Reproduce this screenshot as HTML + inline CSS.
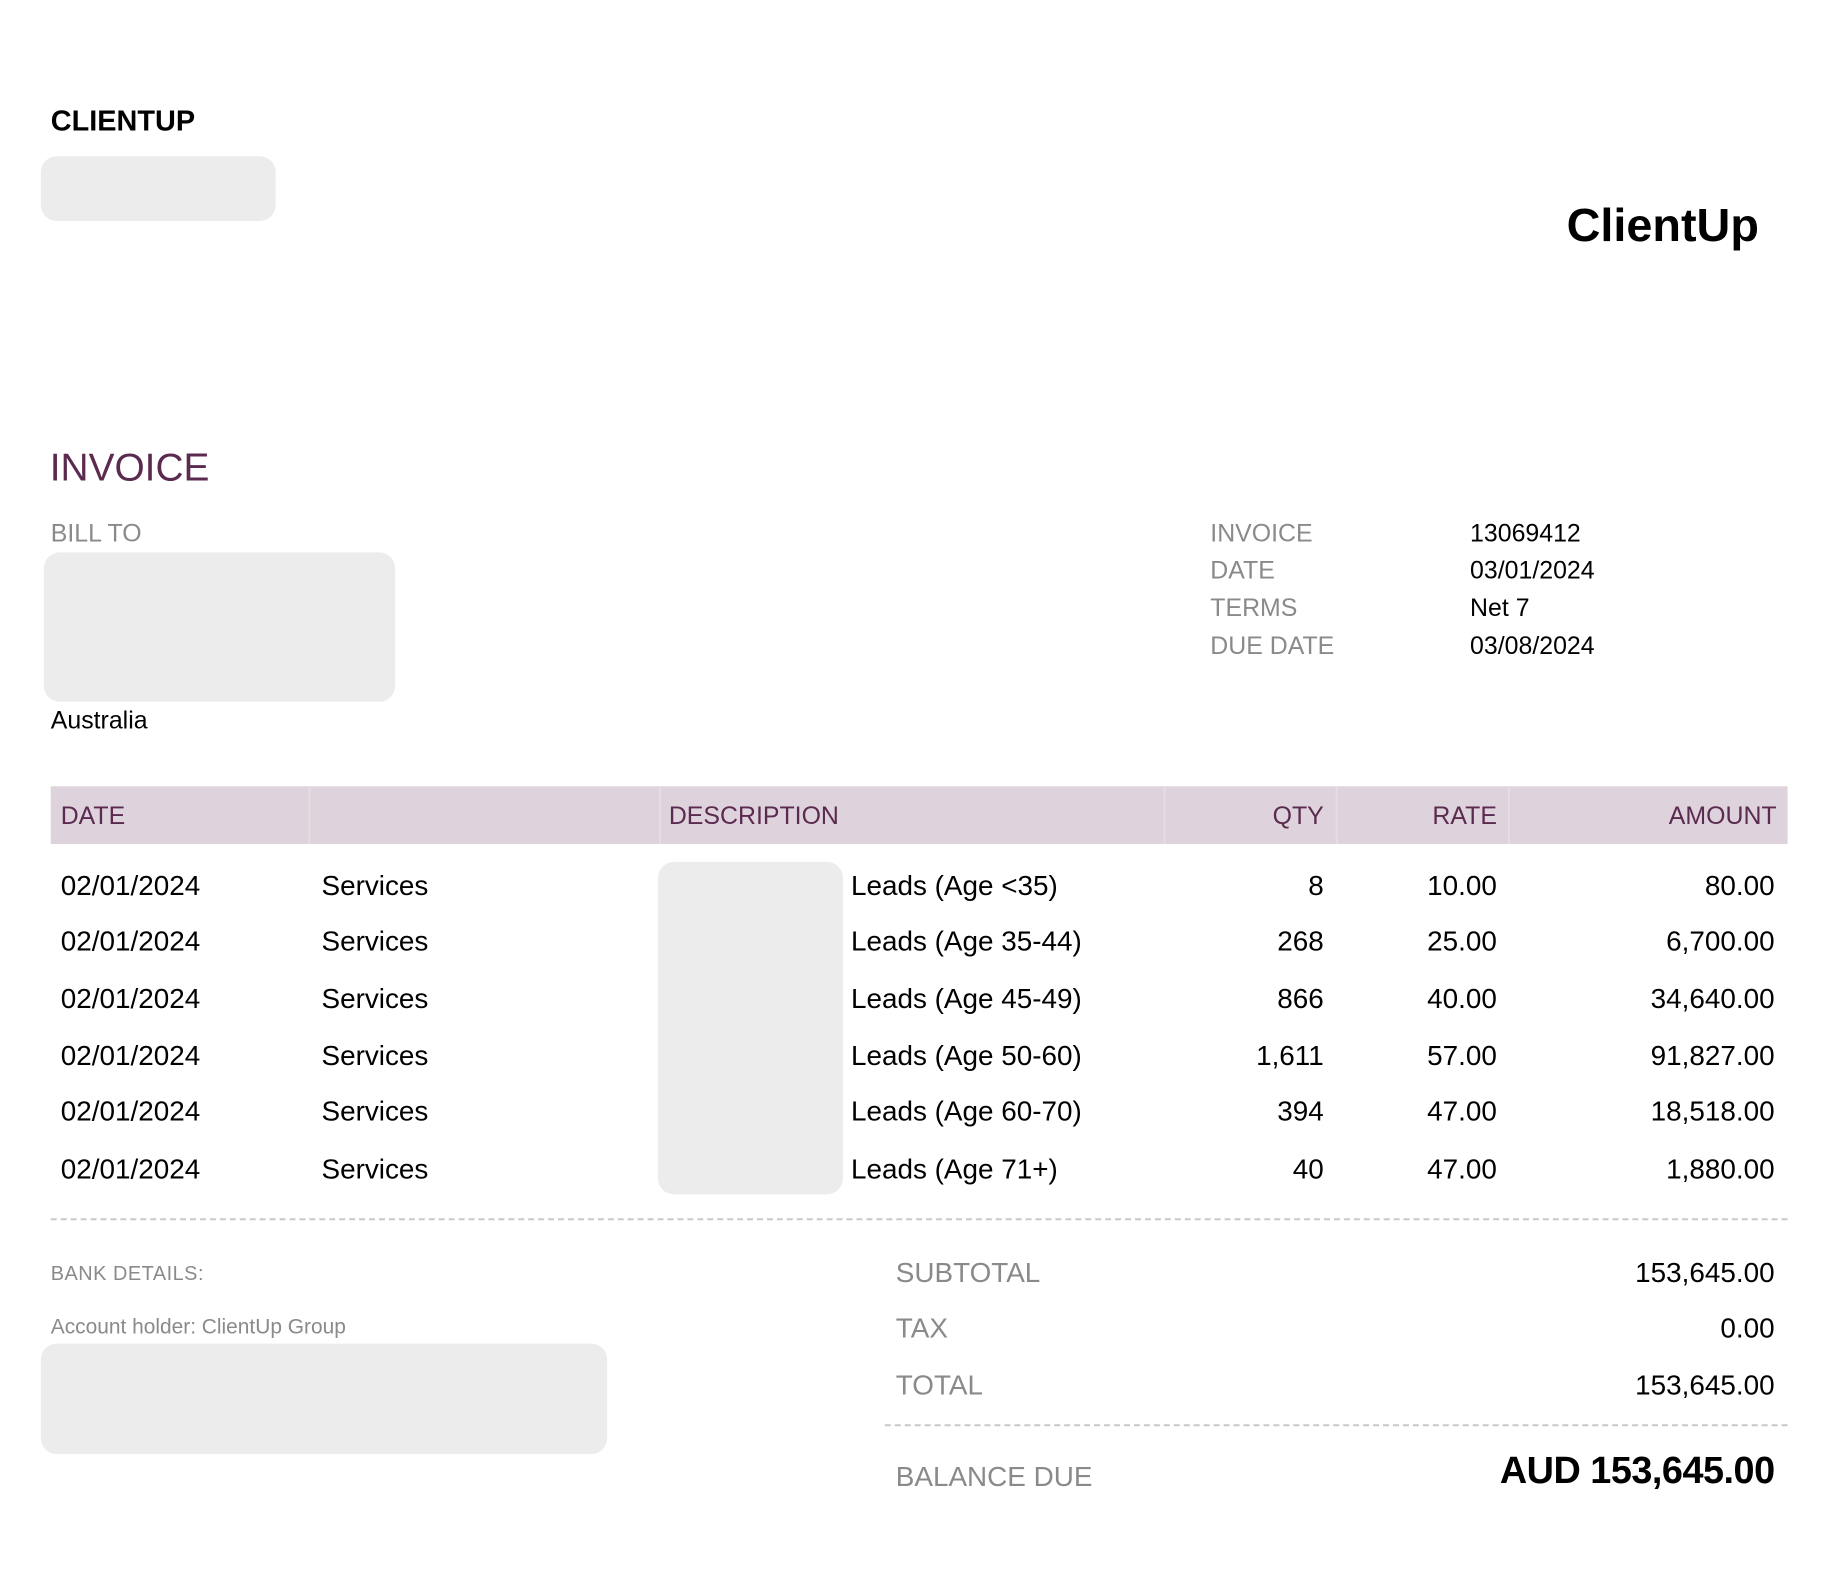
<!DOCTYPE html>
<html><head><meta charset="utf-8"><style>
*{margin:0;padding:0;box-sizing:border-box}
html,body{width:1838px;height:1582px;background:#fff;overflow:hidden}
body{font-family:"Liberation Sans",Arial,sans-serif;color:#000}
#w{position:absolute;left:0;top:0;width:1838px;height:1582px;transform:scale(0.9953);transform-origin:0 0}
.t{position:absolute;line-height:1;white-space:nowrap}
.r{text-align:right}
.g{color:#8a8a8a}
.p{color:#5b2a4f}
.box{position:absolute;background:#ececec;border-radius:16px}
.hdr{position:absolute;left:51px;top:790px;width:1745px;height:58px;background:#ded3dc}
.div{position:absolute;top:790px;width:2px;height:58px;background:#e6dde4}
.dash{position:absolute;height:0;border-top:2px dashed #c8c8c8}
.row{font-size:28px}
</style></head><body><div id="w">
<div class="t" style="left:51px;top:108px;font-size:29px;font-weight:bold">CLIENTUP</div>
<div class="box" style="left:41px;top:157px;width:236px;height:65px"></div>
<div class="t" style="left:1574px;top:202px;font-size:47px;font-weight:bold">ClientUp</div>

<div class="t p" style="left:50px;top:451px;font-size:39px">INVOICE</div>
<div class="t g" style="left:51px;top:524px;font-size:25px">BILL TO</div>
<div class="box" style="left:44px;top:555px;width:353px;height:150px"></div>
<div class="t" style="left:51px;top:712px;font-size:25px">Australia</div>

<div class="t g" style="left:1216px;top:524px;font-size:25px">INVOICE</div>
<div class="t g" style="left:1216px;top:561px;font-size:25px">DATE</div>
<div class="t g" style="left:1216px;top:599px;font-size:25px">TERMS</div>
<div class="t g" style="left:1216px;top:637px;font-size:25px">DUE DATE</div>
<div class="t" style="left:1477px;top:524px;font-size:25px">13069412</div>
<div class="t" style="left:1477px;top:561px;font-size:25px">03/01/2024</div>
<div class="t" style="left:1477px;top:599px;font-size:25px">Net 7</div>
<div class="t" style="left:1477px;top:637px;font-size:25px">03/08/2024</div>

<div class="hdr"></div>
<div class="div" style="left:310px"></div>
<div class="div" style="left:662px"></div>
<div class="div" style="left:1169px"></div>
<div class="div" style="left:1342px"></div>
<div class="div" style="left:1515px"></div>
<div class="t p" style="left:61px;top:808px;font-size:25px">DATE</div>
<div class="t p" style="left:672px;top:808px;font-size:25px">DESCRIPTION</div>
<div class="t p r" style="right:508px;top:808px;font-size:25px">QTY</div>
<div class="t p r" style="right:334px;top:808px;font-size:25px">RATE</div>
<div class="t p r" style="right:53px;top:808px;font-size:25px">AMOUNT</div>

<div class="box" style="left:661px;top:866px;width:186px;height:334px"></div>

<div class="t row" style="left:61px;top:876px">02/01/2024</div>
<div class="t row" style="left:323px;top:876px">Services</div>
<div class="t row" style="left:855px;top:876px">Leads (Age &lt;35)</div>
<div class="t row r" style="right:508px;top:876px">8</div>
<div class="t row r" style="right:334px;top:876px">10.00</div>
<div class="t row r" style="right:55px;top:876px">80.00</div>

<div class="t row" style="left:61px;top:932px">02/01/2024</div>
<div class="t row" style="left:323px;top:932px">Services</div>
<div class="t row" style="left:855px;top:932px">Leads (Age 35-44)</div>
<div class="t row r" style="right:508px;top:932px">268</div>
<div class="t row r" style="right:334px;top:932px">25.00</div>
<div class="t row r" style="right:55px;top:932px">6,700.00</div>

<div class="t row" style="left:61px;top:990px">02/01/2024</div>
<div class="t row" style="left:323px;top:990px">Services</div>
<div class="t row" style="left:855px;top:990px">Leads (Age 45-49)</div>
<div class="t row r" style="right:508px;top:990px">866</div>
<div class="t row r" style="right:334px;top:990px">40.00</div>
<div class="t row r" style="right:55px;top:990px">34,640.00</div>

<div class="t row" style="left:61px;top:1047px">02/01/2024</div>
<div class="t row" style="left:323px;top:1047px">Services</div>
<div class="t row" style="left:855px;top:1047px">Leads (Age 50-60)</div>
<div class="t row r" style="right:508px;top:1047px">1,611</div>
<div class="t row r" style="right:334px;top:1047px">57.00</div>
<div class="t row r" style="right:55px;top:1047px">91,827.00</div>

<div class="t row" style="left:61px;top:1103px">02/01/2024</div>
<div class="t row" style="left:323px;top:1103px">Services</div>
<div class="t row" style="left:855px;top:1103px">Leads (Age 60-70)</div>
<div class="t row r" style="right:508px;top:1103px">394</div>
<div class="t row r" style="right:334px;top:1103px">47.00</div>
<div class="t row r" style="right:55px;top:1103px">18,518.00</div>

<div class="t row" style="left:61px;top:1161px">02/01/2024</div>
<div class="t row" style="left:323px;top:1161px">Services</div>
<div class="t row" style="left:855px;top:1161px">Leads (Age 71+)</div>
<div class="t row r" style="right:508px;top:1161px">40</div>
<div class="t row r" style="right:334px;top:1161px">47.00</div>
<div class="t row r" style="right:55px;top:1161px">1,880.00</div>

<div class="dash" style="left:51px;top:1224px;width:1745px"></div>

<div class="t g" style="left:51px;top:1270px;font-size:20px;letter-spacing:0.5px">BANK DETAILS:</div>
<div class="t g" style="left:51px;top:1323px;font-size:21px">Account holder: ClientUp Group</div>
<div class="box" style="left:41px;top:1350px;width:569px;height:111px"></div>

<div class="t g" style="left:900px;top:1265px;font-size:28px">SUBTOTAL</div>
<div class="t g" style="left:900px;top:1321px;font-size:28px">TAX</div>
<div class="t g" style="left:900px;top:1378px;font-size:28px">TOTAL</div>
<div class="t r" style="right:55px;top:1265px;font-size:28px">153,645.00</div>
<div class="t r" style="right:55px;top:1321px;font-size:28px">0.00</div>
<div class="t r" style="right:55px;top:1378px;font-size:28px">153,645.00</div>

<div class="dash" style="left:889px;top:1431px;width:907px"></div>

<div class="t g" style="left:900px;top:1470px;font-size:28px">BALANCE DUE</div>
<div class="t r" style="right:55px;top:1459px;font-size:38px;font-weight:bold;letter-spacing:-0.5px">AUD 153,645.00</div>
</div></body></html>
